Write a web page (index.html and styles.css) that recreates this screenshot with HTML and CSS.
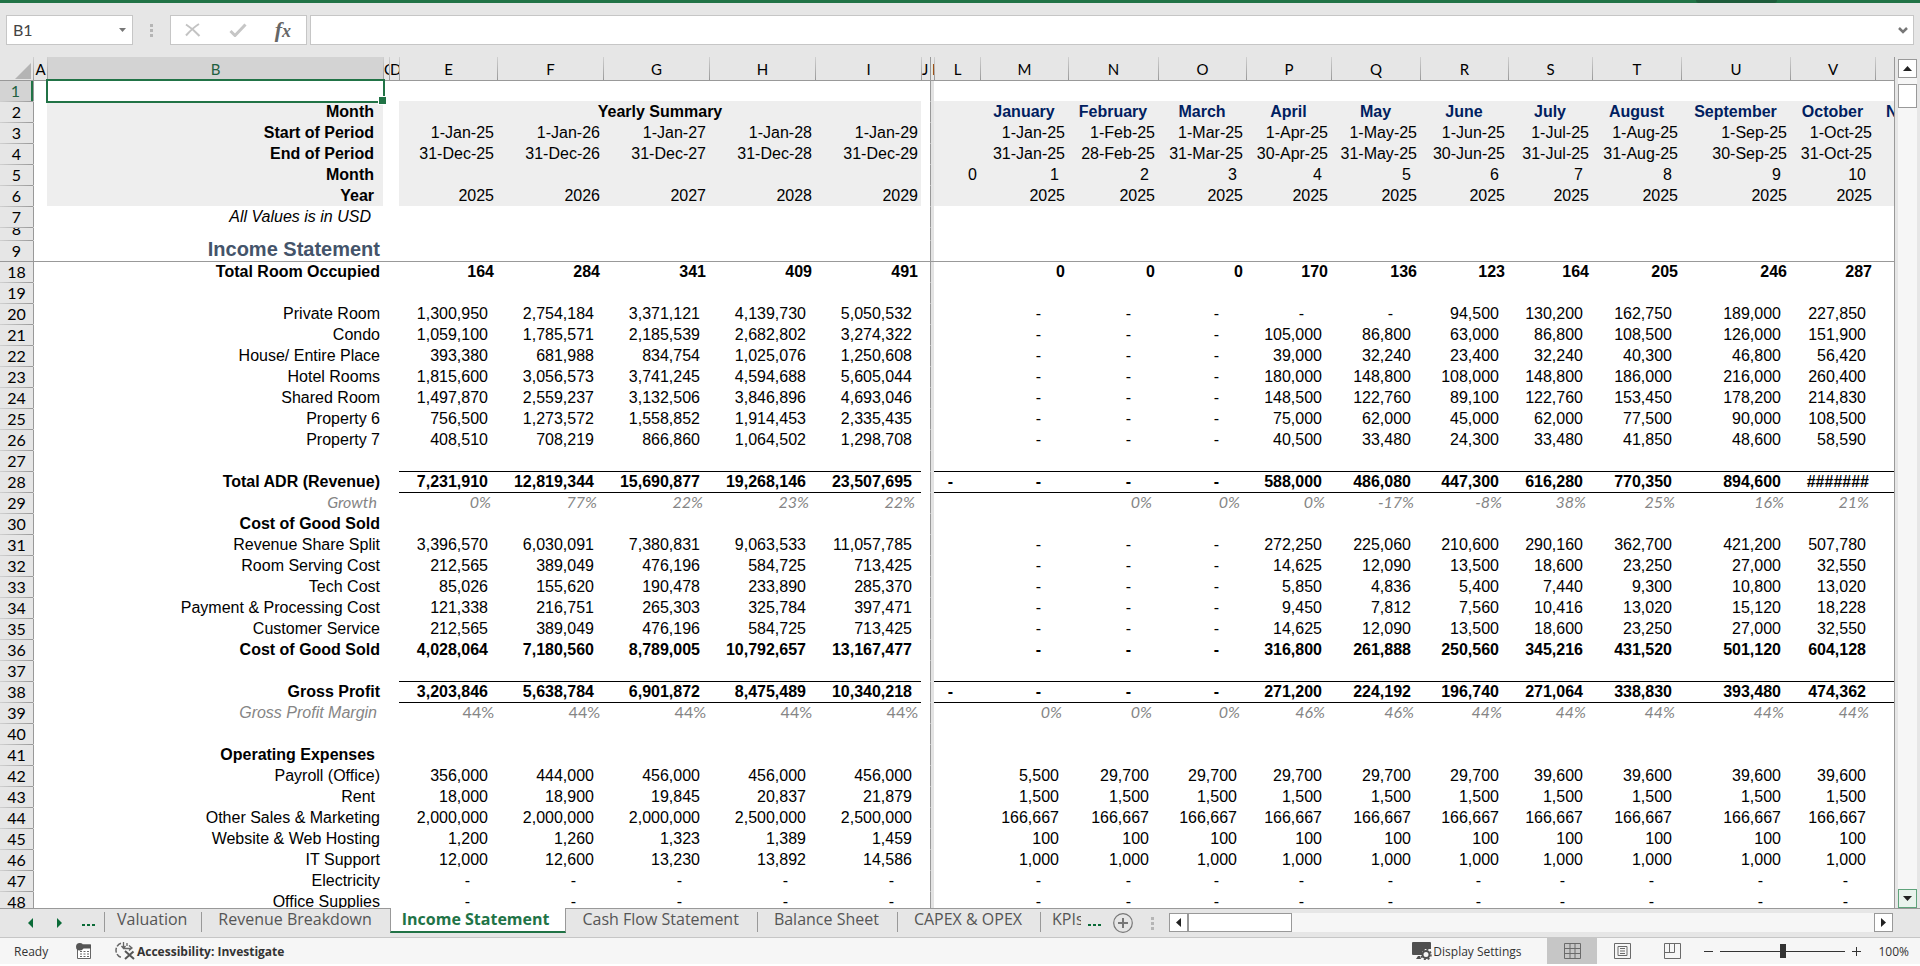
FILE: index.html
```html
<!DOCTYPE html>
<html lang="en">
<head>
<meta charset="utf-8">
<title>Income Statement</title>
<link rel="stylesheet" href="styles.css">
</head>
<body>
<div class="titlebar"><span class="titlebar-shade"></span></div>
<header class="formula-bar">
  <div class="name-box">
    <input type="text" value="B1" aria-label="Name box">
    <button type="button" aria-label="Open name list"><svg width="7" height="4"><path d="M0 0h7L3.500 4z" fill="#777"/></svg></button>
  </div>
  <span class="grip"><i></i><i></i><i></i></span>
  <div class="formula-buttons">
    <button type="button" aria-label="Cancel"><svg width="16" height="14" viewBox="0 0 16 14"><path d="M1 1.500C5 4 10 8 14.500 13M14 1C9 4 5 8 1 12.500" fill="none" stroke="#c3c3c3" stroke-width="2"/></svg></button>
    <button type="button" aria-label="Enter"><svg width="18" height="14" viewBox="0 0 18 14"><path d="M1.500 8l4.500 4.500L16.500 1.500" fill="none" stroke="#c6c6c6" stroke-width="3"/></svg></button>
    <button type="button" class="fx" aria-label="Insert function"><span class="fx-f">f</span><span class="fx-x">x</span></button>
  </div>
  <div class="formula-input">
    <input type="text" aria-label="Formula">
    <button type="button" aria-label="Expand formula bar"><svg width="10" height="7" viewBox="0 0 10 7"><path d="M1 1l4 4 4-4" fill="none" stroke="#777" stroke-width="2.500"/></svg></button>
  </div>
</header>
<main class="workbook">
  <div class="sheet">
    <table class="grid">
      <colgroup id="cols"></colgroup>
      <thead><tr id="letters"></tr></thead>
      <tbody id="rows"></tbody>
    </table>
  </div>
  <div class="vscroll">
    <button type="button" aria-label="Scroll up"><svg width="9" height="5"><path d="M4.500 0L9 5H0z" fill="#222"/></svg></button>
    <div class="vtrack"><div class="vthumb"></div></div>
    <button type="button" class="hot" aria-label="Scroll down"><svg width="9" height="5"><path d="M0 0h9L4.500 5z" fill="#222"/></svg></button>
  </div>
</main>
<nav class="tabbar" aria-label="Sheets">
  <div class="tab-nav">
    <button type="button" aria-label="Previous sheet"><svg width="5" height="10"><path d="M5 0v10L0 5z" fill="#0b6b38"/></svg></button>
    <button type="button" aria-label="Next sheet"><svg width="5" height="10"><path d="M0 0v10l5-5z" fill="#0b6b38"/></svg></button>
    <button type="button" class="more" aria-label="More sheets"><i></i><i></i><i></i></button>
  </div>
  <button type="button" class="tab">Valuation</button>
  <button type="button" class="tab">Revenue Breakdown</button>
  <button type="button" class="tab active">Income Statement</button>
  <button type="button" class="tab">Cash Flow Statement</button>
  <button type="button" class="tab">Balance Sheet</button>
  <button type="button" class="tab">CAPEX &amp; OPEX</button>
  <button type="button" class="tab cut"><span>KPIs</span></button>
  <button type="button" class="more" aria-label="More sheets"><i></i><i></i><i></i></button>
  <button type="button" class="add" aria-label="New sheet"><svg width="20" height="20" viewBox="0 0 20 20"><circle cx="10" cy="10" r="9.300" fill="none" stroke="#777" stroke-width="1.200"/><path d="M10 5v10M5 10h10" stroke="#777" stroke-width="2"/></svg></button>
  <span class="grip"><i></i><i></i><i></i></span>
  <div class="hscroll">
    <button type="button" aria-label="Scroll left"><svg width="5" height="9"><path d="M5 0v9L0 4.500z" fill="#222"/></svg></button>
    <div class="htrack"><div class="hthumb"></div></div>
    <button type="button" aria-label="Scroll right"><svg width="5" height="9"><path d="M0 0v9l5-4.500z" fill="#222"/></svg></button>
  </div>
</nav>
<footer class="status">
  <span class="ready">Ready</span>
  <button type="button" class="macro" aria-label="Record macro"><svg width="15" height="16" viewBox="0 0 15 16"><path d="M1.500 6v9.500h13V2H7" fill="#fff" stroke="#666" stroke-width="1"/><path d="M7 1.500h8v4H6z" fill="#555"/><circle cx="3.800" cy="3.800" r="3.800" fill="#555"/><path d="M4 8.500h9M4 11h9M4 13.500h9" stroke="#666" stroke-width="1.200" stroke-dasharray="2 1.500"/></svg></button>
  <button type="button" class="access"><svg width="20" height="18" viewBox="0 0 20 18"><path d="M6 1.200A7.500 7.500 0 0 0 6.500 15.500" fill="none" stroke="#666" stroke-width="1.500" stroke-dasharray="5 1.500"/><path d="M8.500 0v6M6.500 4l2 2.500 2-2.500M8.500 6.500h8M14 3.500l3 2.500-3 2.500M12 1v3" fill="none" stroke="#666" stroke-width="1.300"/><path d="M10 9l9 8M18.500 9.500L10 17" stroke="#555" stroke-width="2"/></svg>Accessibility: Investigate</button>
  <span class="spacer"></span>
  <button type="button" class="display"><svg width="20" height="18" viewBox="0 0 20 18"><path d="M1 0h17a1 1 0 0 1 1 1v6h-6l-3 3v3H1a1 1 0 0 1-1-1V1a1 1 0 0 1 1-1z" fill="#505050"/><path d="M4 17h5l-1-3H6z" fill="#505050"/><circle cx="14" cy="12.500" r="3.500" fill="none" stroke="#505050" stroke-width="2"/><circle cx="14" cy="12.500" r="5" fill="none" stroke="#505050" stroke-width="1.500" stroke-dasharray="2 1.900"/></svg>Display Settings</button>
  <button type="button" class="view on" aria-label="Normal view"><svg width="17" height="16" viewBox="0 0 17 16"><path d="M.5.500h16v15H.5zM6 .5v15M11 .5v15M.5 5.500h16M.5 10.500h16" fill="none" stroke="#6a6a6a"/></svg></button>
  <button type="button" class="view" aria-label="Page layout"><svg width="17" height="16" viewBox="0 0 17 16"><path d="M.5.500h16v15H.5zM4 3.500h9v9H4zM6 5.500h5M6 8h5M6 10.500h5" fill="none" stroke="#6a6a6a"/></svg></button>
  <button type="button" class="view" aria-label="Page break preview"><svg width="17" height="16" viewBox="0 0 17 16"><path d="M.5.500h16v15H.5zM.5 9.500h10v-9M5.500.5v9" fill="none" stroke="#6a6a6a"/></svg></button>
  <div class="zoom">
    <button type="button" aria-label="Zoom out"><svg width="9" height="9"><path d="M0 4.500h9" stroke="#333"/></svg></button>
    <input type="range" min="0" max="100" value="50" aria-label="Zoom">
    <button type="button" aria-label="Zoom in"><svg width="9" height="9"><path d="M0 4.500h9M4.500 0v9" stroke="#333"/></svg></button>
  </div>
  <span class="percent">100%</span>
</footer>
<script src="sheet.js"></script>
</body>
</html>
```
FILE: styles.css
```css
* { box-sizing: border-box; }

html, body { height: 100%; }

body {
  margin: 0;
  padding-bottom: 2px;
  display: flex;
  flex-direction: column;
  overflow: hidden;
  background: #fff;
  color: #000;
  font-family: "Liberation Sans", Arial, sans-serif;
  font-size: 16px;
}

button, input {
  margin: 0;
  padding: 0;
  border: 0;
  background: none;
  font: inherit;
  color: inherit;
}

svg { display: block; flex: none; }

/* Top strip */
.titlebar {
  flex: none;
  display: flex;
  justify-content: flex-end;
  height: 3px;
  padding-right: 143px;
  background: #217346;
}
.titlebar-shade { width: 81px; background: #1e5c3b; border-radius: 0 0 6px 6px; }

/* Formula bar */
.formula-bar {
  flex: none;
  display: flex;
  align-items: center;
  height: 54px;
  padding: 0 6px 0 6px;
  background: #e6e6e6;
}
.name-box, .formula-buttons, .formula-input {
  display: flex;
  align-items: center;
  height: 30px;
  border: 1px solid #c6c6c6;
  background: #fff;
}
.name-box {
  width: 127px;
  padding: 0 6px;
  color: #444;
  font-family: Lato, sans-serif;
  font-size: 16px;
}
.name-box input { flex: 1; min-width: 0; height: 28px; padding-bottom: 2px; }
.grip {
  display: flex;
  flex-direction: column;
  gap: 2px;
}
.grip i { width: 3px; height: 3px; background: #b5b5b5; }
.formula-bar .grip { margin: 0 17px; }
.formula-buttons { width: 137px; margin-right: 3px; padding: 0 15px 0 14px; justify-content: space-between; }
.fx {
  display: flex;
  align-items: baseline;
  color: #666;
  font-family: "Liberation Serif", serif;
  font-style: italic;
  font-weight: bold;
  line-height: 26px;
}
.fx-f { font-size: 22px; }
.fx-x { font-size: 18px; }
.formula-input { flex: 1; padding: 0 5px; }
.formula-input input { flex: 1; height: 28px; }

/* Sheet area */
.workbook {
  flex: 1;
  min-height: 0;
  display: flex;
  background: #e6e6e6;
}
.sheet {
  flex: 1;
  min-width: 0;
  overflow: hidden;
  border-right: 1px solid #999;
}
.grid {
  width: 100%;
  table-layout: fixed;
  border-collapse: separate;
  border-spacing: 0;
  background: #fff;
}
.grid th, .grid td {
  padding: 0;
  white-space: nowrap;
  line-height: 20px;
}
.grid th {
  font-family: Lato, sans-serif;
  font-size: 15px;
  font-weight: 400;
  text-align: center;
}
.grid thead th {
  height: 24px;
  padding-left: 1px;
  overflow: hidden;
  border-bottom: 1px solid #999;
  background: linear-gradient(#d0d0d0, #999) left / 1px 100% no-repeat #e6e6e6;
}
.grid thead th:first-child { background: #e6e6e6; }
.grid thead svg { margin: 4px 0 0 14px; }
.grid thead th.picked { background-color: #d3d3d3; color: #1f6040; }
.grid thead th.freeze { background: #e6e6e6; border-left: 1px solid #999; }
.grid thead th.narrow { text-align: left; }
.grid thead th span { display: block; padding-top: 1px; overflow: hidden; }

.grid tbody th {
  font-size: 16px;
  background: linear-gradient(to right, #d0d0d0, #999) top / 100% 1px no-repeat #e6e6e6;
  border-top: 1px solid transparent;
  background-origin: border-box;
}
.grid tbody td {
  border-top: 1px solid transparent;
  text-align: right;
  padding-right: 9px;
}
.grid td.a { border-left: 1px solid #999; }
.grid tbody td.freeze {
  padding: 0;
  border-left: 1px solid #999;
  background: #e3e3e3;
}
.grid tbody td.label { padding-right: 3px; }
.grid tbody td.opening { padding-right: 3px; }
.grid tbody td.edge { padding: 0 0 0 11px; text-align: left; overflow: hidden; }
.grid tbody td.dash { padding-right: 27px; }
.grid tbody td.hash { padding-right: 6px; }

.first th, .first td { height: 20px; }
.grid .first td, .grid .first th { border-top: 0; }
.grid .first th { background: #d3d3d3; color: #1f6040; border-right: 2px solid #217346; }
.cell-b1 { position: relative; }
.selection {
  position: absolute;
  inset: -2px -2px -2px -1px;
  border: 2px solid #217346;
}
.selection::after {
  content: "";
  position: absolute;
  right: -4px;
  bottom: -4px;
  width: 7px;
  height: 7px;
  border: 1px solid #fff;
  background: #217346;
}

.head .shade { background: #eee; }
.grid .head td.label { padding-right: 9px; font-weight: bold; }
.grid .flush td { padding-right: 3px; }
.grid .months td { padding: 0; text-align: center; color: #002060; font-weight: bold; }
.grid .months td.summary { color: #000; }
.grid .months td.label { color: #000; text-align: right; }
.grid .months td.edge { padding-left: 11px; text-align: left; }
.grid .note td.label { padding-right: 12px; font-style: italic; }
.short th span { display: block; height: 12px; line-height: 2px; overflow: hidden; }
.grid .title td {
  height: 21px;
  color: #44546a;
  font-size: 20px;
  font-weight: bold;
  line-height: 16px;
  vertical-align: top;
}
.grid .frozen-end td, .grid .frozen-end th { border-top: 1px solid #999; }
.bold td { font-weight: bold; }
.grid .indent td.label { padding-right: 8px; }
.grid .ruled td.rule { border-top-color: #000; }
.grid .percent-row td {
  height: 21px;
  color: #858585;
  font-family: Lato, sans-serif;
  font-style: italic;
  line-height: 18px;
  vertical-align: top;
}
.grid .percent-row td, .grid .percent-row td.label { padding-right: 6px; }
.grid .margin td.label { font-family: "Liberation Sans", Arial, sans-serif; line-height: 20px; }
.grid .margin td.year { padding-right: 3px; font-style: normal; }

/* Vertical scroll bar */
.vscroll {
  flex: none;
  width: 25px;
  padding: 2px 3px 0 3px;
  display: flex;
  flex-direction: column;
}
.vscroll button, .hscroll button {
  flex: none;
  display: grid;
  place-items: center;
  width: 19px;
  height: 19px;
  border: 1px solid #999;
  background: #fff;
}
.vscroll .hot { border-color: #5fa37b; background: #e9f3ed; }
.vtrack { flex: 1; padding-top: 6px; background: #f6f6f6; }
.vthumb { height: 24px; border: 1px solid #999; background: #fff; }

/* Sheet tabs */
.tabbar {
  flex: none;
  display: flex;
  align-items: flex-start;
  height: 30px;
  padding-right: 27px;
  border-top: 1px solid #999;
  border-bottom: 1px solid #c6c6c6;
  background: #e6e6e6;
  color: #555;
  font-family: "Open Sans", "Noto Sans", sans-serif;
  font-size: 16px;
}
.tab-nav {
  display: flex;
  align-items: center;
  gap: 24px;
  height: 28px;
  padding-left: 28px;
}
.more { display: flex; gap: 2px; align-items: center; }
.more i { width: 3px; height: 2px; background: #0b6b38; }
.tab-nav .more { margin: 4px 0 0 -4px; }
.tab {
  display: flex;
  align-items: flex-start;
  height: 20px;
  margin-top: 3px;
  padding: 0 18px 0 16px;
  border-left: 1px solid #999;
  line-height: 15px;
  white-space: nowrap;
}
.tab-nav + .tab { margin-left: 9px; padding: 0 14px 0 12px; }
.tab.active {
  height: 25px;
  margin-top: -1px;
  padding: 4px 16px 0 11px;
  border-right: 1px solid #999;
  border-bottom: 2px solid #217346;
  background: #fff;
  color: #217346;
  font-weight: bold;
}
.tab.active + .tab { border-left: 0; }
.tab.cut { padding: 0 7px 0 11px; }
.tab.cut span { display: block; width: 29px; overflow: hidden; }
.tab.cut + .more { margin-top: 15px; }
.add { margin: 4px 18px 0 12px; }
.tabbar .grip { margin-top: 8px; }
.hscroll { flex: 1; display: flex; margin: 4px 0 0 15px; }
.htrack { flex: 1; background: #f6f6f6; }
.hthumb { width: 104px; height: 19px; border: 1px solid #999; background: #fff; }

/* Status bar */
.status {
  flex: none;
  display: flex;
  align-items: center;
  height: 26px;
  padding: 0 11px 0 14px;
  background: #f6f6f6;
  color: #333;
  font-family: "Open Sans", "Noto Sans", sans-serif;
  font-size: 12px;
}
.status button { display: flex; align-items: center; gap: 2px; white-space: nowrap; }
.ready { width: 62px; }
.macro { width: 39px; }
.access { font-weight: bold; }
.spacer { flex: 1; }
.status .display { margin-right: 26px; gap: 1px; }
.view { width: 50px; height: 26px; justify-content: center; }
.view.on { background: #c6c6c6; }
.zoom { display: flex; align-items: center; gap: 7px; margin-left: 7px; }
.zoom input {
  appearance: none;
  width: 125px;
  height: 14px;
  background: linear-gradient(#333, #333) center / 100% 1px no-repeat;
}
.zoom input::-webkit-slider-thumb {
  appearance: none;
  width: 6px;
  height: 14px;
  background: #333;
}
.percent { margin-left: 17px; }
```
FILE: sheet.js
```js
const columns = [
  ["A", 14], ["B", 336], ["C", 6], ["D", 10], ["E", 98], ["F", 106], ["G", 106], ["H", 106], ["I", 106],
  ["J", 9], ["K", 4], ["L", 46], ["M", 88], ["N", 90], ["O", 88], ["P", 85], ["Q", 89], ["R", 88],
  ["S", 84], ["T", 89], ["U", 109], ["V", 85], ["", 0]
];

// Each row: number, label, yearly values (E-I), monthly values (L-V), row classes.
const D = "- - -";
const rows = [
  [1, "", "", "", "first"],
  [2, "Month", "*", "_ January February March April May June July August September October N", "head months"],
  [3, "Start of Period", "1-Jan-25 1-Jan-26 1-Jan-27 1-Jan-28 1-Jan-29", "_ 1-Jan-25 1-Feb-25 1-Mar-25 1-Apr-25 1-May-25 1-Jun-25 1-Jul-25 1-Aug-25 1-Sep-25 1-Oct-25", "head flush"],
  [4, "End of Period", "31-Dec-25 31-Dec-26 31-Dec-27 31-Dec-28 31-Dec-29", "_ 31-Jan-25 28-Feb-25 31-Mar-25 30-Apr-25 31-May-25 30-Jun-25 31-Jul-25 31-Aug-25 30-Sep-25 31-Oct-25", "head flush"],
  [5, "Month", "", "0 1 2 3 4 5 6 7 8 9 10", "head"],
  [6, "Year", "2025 2026 2027 2028 2029", "_ 2025 2025 2025 2025 2025 2025 2025 2025 2025 2025", "head flush"],
  [7, "All Values is in USD", "", "", "note"],
  [8, "", "", "", "short"],
  [9, "Income Statement", "", "", "title"],
  [18, "Total Room Occupied", "164 284 341 409 491", "_ 0 0 0 170 136 123 164 205 246 287", "bold flush frozen-end"],
  [19, "", "", "", ""],
  [20, "Private Room", "1,300,950 2,754,184 3,371,121 4,139,730 5,050,532", `_ ${D} - - 94,500 130,200 162,750 189,000 227,850`, ""],
  [21, "Condo", "1,059,100 1,785,571 2,185,539 2,682,802 3,274,322", `_ ${D} 105,000 86,800 63,000 86,800 108,500 126,000 151,900`, ""],
  [22, "House/ Entire Place", "393,380 681,988 834,754 1,025,076 1,250,608", `_ ${D} 39,000 32,240 23,400 32,240 40,300 46,800 56,420`, ""],
  [23, "Hotel Rooms", "1,815,600 3,056,573 3,741,245 4,594,688 5,605,044", `_ ${D} 180,000 148,800 108,000 148,800 186,000 216,000 260,400`, ""],
  [24, "Shared Room", "1,497,870 2,559,237 3,132,506 3,846,896 4,693,046", `_ ${D} 148,500 122,760 89,100 122,760 153,450 178,200 214,830`, ""],
  [25, "Property 6", "756,500 1,273,572 1,558,852 1,914,453 2,335,435", `_ ${D} 75,000 62,000 45,000 62,000 77,500 90,000 108,500`, ""],
  [26, "Property 7", "408,510 708,219 866,860 1,064,502 1,298,708", `_ ${D} 40,500 33,480 24,300 33,480 41,850 48,600 58,590`, ""],
  [27, "", "", "", ""],
  [28, "Total ADR (Revenue)", "7,231,910 12,819,344 15,690,877 19,268,146 23,507,695", `- ${D} 588,000 486,080 447,300 616,280 770,350 894,600 #######`, "bold ruled"],
  [29, "Growth", "0% 77% 22% 23% 22%", "_ _ 0% 0% 0% -17% -8% 38% 25% 16% 21%", "percent-row ruled"],
  [30, "Cost of Good Sold", "", "", "bold"],
  [31, "Revenue Share Split", "3,396,570 6,030,091 7,380,831 9,063,533 11,057,785", `_ ${D} 272,250 225,060 210,600 290,160 362,700 421,200 507,780`, ""],
  [32, "Room Serving Cost", "212,565 389,049 476,196 584,725 713,425", `_ ${D} 14,625 12,090 13,500 18,600 23,250 27,000 32,550`, ""],
  [33, "Tech Cost", "85,026 155,620 190,478 233,890 285,370", `_ ${D} 5,850 4,836 5,400 7,440 9,300 10,800 13,020`, ""],
  [34, "Payment & Processing Cost", "121,338 216,751 265,303 325,784 397,471", `_ ${D} 9,450 7,812 7,560 10,416 13,020 15,120 18,228`, ""],
  [35, "Customer Service", "212,565 389,049 476,196 584,725 713,425", `_ ${D} 14,625 12,090 13,500 18,600 23,250 27,000 32,550`, ""],
  [36, "Cost of Good Sold", "4,028,064 7,180,560 8,789,005 10,792,657 13,167,477", `_ ${D} 316,800 261,888 250,560 345,216 431,520 501,120 604,128`, "bold"],
  [37, "", "", "", ""],
  [38, "Gross Profit", "3,203,846 5,638,784 6,901,872 8,475,489 10,340,218", `- ${D} 271,200 224,192 196,740 271,064 338,830 393,480 474,362`, "bold ruled"],
  [39, "Gross Profit Margin", "44% 44% 44% 44% 44%", "_ 0% 0% 0% 46% 46% 44% 44% 44% 44% 44%", "percent-row margin ruled"],
  [40, "", "", "", ""],
  [41, "Operating Expenses", "", "", "bold indent"],
  [42, "Payroll (Office)", "356,000 444,000 456,000 456,000 456,000", "_ 5,500 29,700 29,700 29,700 29,700 29,700 39,600 39,600 39,600 39,600", ""],
  [43, "Rent", "18,000 18,900 19,845 20,837 21,879", "_" + " 1,500".repeat(10), "indent"],
  [44, "Other Sales & Marketing", "2,000,000 2,000,000 2,000,000 2,500,000 2,500,000", "_" + " 166,667".repeat(10), ""],
  [45, "Website & Web Hosting", "1,200 1,260 1,323 1,389 1,459", "_" + " 100".repeat(10), ""],
  [46, "IT Support", "12,000 12,600 13,230 13,892 14,586", "_" + " 1,000".repeat(10), ""],
  [47, "Electricity", "- - - - -", "_" + " -".repeat(10), ""],
  [48, "Office Supplies", "- - - - -", "_" + " -".repeat(10), ""]
];

function make(tag, className, text) {
  const el = document.createElement(tag);
  if (className) el.className = className;
  if (text) el.textContent = text;
  return el;
}

const cols = document.getElementById("cols");
const letters = document.getElementById("letters");
const gutter = make("col");
gutter.style.width = "33px";
cols.append(gutter);
const corner = make("th");
corner.innerHTML = '<svg width="16" height="16"><path d="M16 0v16H0z" fill="#b4b4b4"/></svg>';
letters.append(corner);
for (const [name, width] of columns) {
  const col = make("col");
  if (width) col.style.width = width + "px";
  cols.append(col);
  const kind = name === "B" ? "picked" : name === "K" ? "freeze narrow" : "CDJ".includes(name) && name ? "narrow" : "";
  const th = make("th", kind);
  th.append(make("span", "", name));
  letters.append(th);
}

function addValues(tr, text, count, kind) {
  const values = text ? text.split(" ") : [];
  for (let i = 0; i < count; i++) {
    const value = values[i] && values[i] !== "_" ? values[i] : "";
    let name = kind;
    if (count === 12 && i === 0) name += " opening";
    if (value === "-") name += " dash";
    if (value.startsWith("##")) name += " hash";
    if (count === 12 && i === 11) name += " edge";
    tr.append(make("td", name, value));
  }
}

const body = document.getElementById("rows");
for (const [number, label, years, months, kind] of rows) {
  const tr = make("tr", kind);
  const th = make("th");
  th.append(make("span", "", String(number)));
  tr.append(th, make("td", "a"));
  const b = make("td", "label shade", label);
  if (number === 1) {
    b.classList.add("cell-b1");
    b.append(make("div", "selection"));
  }
  tr.append(b, make("td"), make("td"));
  if (years === "*") {
    const summary = make("td", "summary shade", "Yearly Summary");
    summary.colSpan = 5;
    tr.append(summary);
  } else {
    addValues(tr, years, 5, "year shade rule");
  }
  tr.append(make("td"), make("td", "freeze"));
  addValues(tr, months, 12, "shade rule");
  body.append(tr);
}
```
